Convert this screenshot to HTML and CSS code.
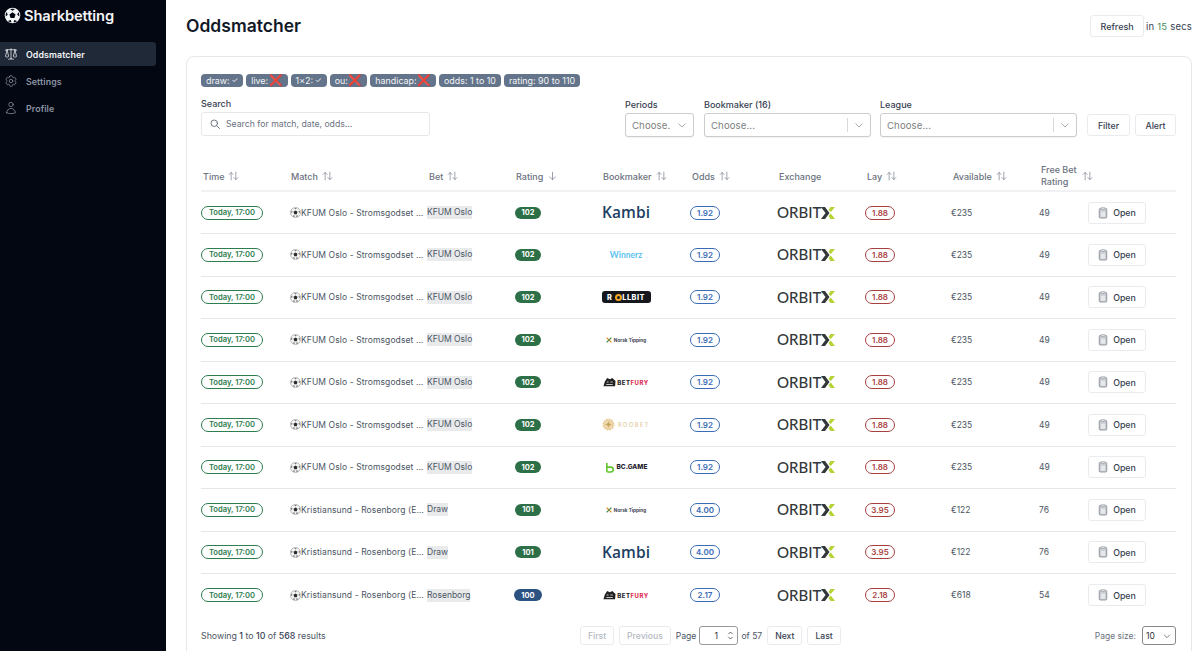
FILE: index.html
```html
<!DOCTYPE html>
<html lang="en">
<head>
<meta charset="utf-8">
<title>Sharkbetting - Oddsmatcher</title>
<link rel="stylesheet" href="styles.css">
</head>
<body>
<svg class="defs" aria-hidden="true">
  <symbol id="ball" viewBox="0 0 24 24">
    <circle cx="12" cy="12" r="11" fill="#f4f4f5" stroke="#9a9a9a" stroke-width="1.400"/>
    <path d="M12 7.500l4.300 3.100-1.600 5H9.300l-1.600-5z" fill="#2b2b2b"/>
    <path d="M9 3.200q3-1 6 0L12 5zM20 7.500q1.700 2.500 1.500 5.500l-2.800-2zM4 7.500Q2.300 10 2.500 13l2.800-2zM6 19.500q2 1.700 4.500 2l-1-3.300zM18 19.500q-2 1.700-4.500 2l1-3.300z" fill="#4a4a4a"/>
  </symbol>
  <symbol id="sort" viewBox="0 0 14 12">
    <path d="M4 11V1.500M1.500 4L4 1.500 6.500 4M10 1v9.500M7.500 8l2.500 2.500L12.500 8" fill="none" stroke="currentColor" stroke-width="1" stroke-linecap="round" stroke-linejoin="round"/>
  </symbol>
  <symbol id="down" viewBox="0 0 12 12">
    <path d="M6 1.500V10.500M2.500 7L6 10.500 9.500 7" fill="none" stroke="currentColor" stroke-width="1" stroke-linecap="round" stroke-linejoin="round"/>
  </symbol>
  <symbol id="chev" viewBox="0 0 12 12">
    <path d="M2.500 4.500L6 8l3.500-3.500" fill="none" stroke="currentColor" stroke-width="1"/>
  </symbol>
  <symbol id="doc" viewBox="0 0 12 14">
    <rect x="1.500" y="1.500" width="9" height="11.500" rx="1.300" fill="#c9cdd3" stroke="#858a92" stroke-width="1"/>
    <rect x="3.500" y=".7" width="5" height="2" rx=".6" fill="#eef0f2" stroke="#858a92" stroke-width=".7"/>
    <path d="M3.500 5.500h5v6h-5z" fill="#e6e8ea"/>
  </symbol>
  <symbol id="orbitx" viewBox="0 0 14 12">
    <path d="M0 0h4L8.500 6 4 12H0l4.500-6z" fill="#33383a"/>
    <path d="M9.500 0H14L9.800 5 7.500 3zM7.500 9l2.300-2.500L14 12H9.500z" fill="#b5d334"/>
  </symbol>
  <symbol id="norskx" viewBox="0 0 10 10">
    <path d="M1 1l8 8" stroke="#e08a2a" stroke-width="2.200"/><path d="M9 1L1 9" stroke="#4a8f4a" stroke-width="2.200"/>
  </symbol>
  <symbol id="fury" viewBox="0 0 14 10">
    <path d="M.5 9.500L2 4.500 4.500.7 7.500 2 10 .7l3.500 3.300-.5 5.500z" fill="#222"/>
    <path d="M4 5h2M8 5h2.500M3.500 7.700h7" stroke="#fff" stroke-width=".8"/>
  </symbol>
</svg>

<div class="app">
  <aside class="sidebar">
    <div class="brand">
      <svg class="brand-ball" viewBox="0 0 24 24"><circle cx="12" cy="12" r="11" fill="#f3f4f6"/><path d="M12 7.500l4.300 3.100-1.600 5H9.300l-1.600-5z" fill="#030712"/><path d="M8.500 2.800q3.500-1 7 0L12 5.200zM20.300 7q1.800 3 1.400 6.300l-3-2.300zM3.700 7q-1.800 3-1.400 6.300l3-2.300zM5.500 19.700q2.300 1.900 5 2.300l-1-3.800zM18.500 19.700q-2.300 1.900-5 2.300l1-3.800z" fill="#030712"/></svg>
      <span>Sharkbetting</span>
    </div>
    <nav class="nav">
      <a class="nav-item active">
        <svg class="nav-icon" viewBox="0 0 24 24"><path d="M12 3v17.250m0 0c-1.472 0-2.882.265-4.185.75M12 20.250c1.472 0 2.882.265 4.185.75M18.750 4.970A48.416 48.416 0 0 0 12 4.500c-2.291 0-4.545.16-6.750.47m13.500 0c1.010.143 2.010.317 3 .52m-3-.52 2.620 10.726c.122.499-.106 1.028-.589 1.202a5.988 5.988 0 0 1-2.031.352 5.988 5.988 0 0 1-2.031-.352c-.483-.174-.711-.703-.59-1.202L18.750 4.971Zm-16.500.52c.99-.203 1.990-.377 3-.52m0 0 2.620 10.726c.122.499-.106 1.028-.589 1.202a5.989 5.989 0 0 1-2.031.352 5.989 5.989 0 0 1-2.031-.352c-.483-.174-.711-.703-.59-1.202L5.250 4.971Z"/></svg>
        Oddsmatcher
      </a>
      <a class="nav-item">
        <svg class="nav-icon" viewBox="0 0 24 24"><path d="M9.594 3.940c.09-.542.56-.94 1.110-.94h2.593c.55 0 1.020.398 1.110.94l.213 1.281c.063.374.313.686.645.870.074.04.147.083.22.127.325.196.72.257 1.075.124l1.217-.456a1.125 1.125 0 0 1 1.370.49l1.296 2.247a1.125 1.125 0 0 1-.26 1.431l-1.003.827c-.293.241-.438.613-.43.992a7.723 7.723 0 0 1 0 .255c-.008.378.137.75.43.991l1.004.827c.424.35.534.955.26 1.430l-1.298 2.247a1.125 1.125 0 0 1-1.369.491l-1.217-.456c-.355-.133-.75-.072-1.076.124a6.470 6.470 0 0 1-.22.128c-.331.183-.581.495-.644.869l-.213 1.281c-.09.543-.56.94-1.110.94h-2.594c-.55 0-1.019-.398-1.110-.94l-.213-1.281c-.062-.374-.312-.686-.644-.870a6.520 6.520 0 0 1-.22-.127c-.325-.196-.72-.257-1.076-.124l-1.217.456a1.125 1.125 0 0 1-1.369-.49l-1.297-2.247a1.125 1.125 0 0 1 .26-1.431l1.004-.827c.292-.24.437-.613.43-.991a6.932 6.932 0 0 1 0-.255c.007-.38-.138-.751-.43-.992l-1.004-.827a1.125 1.125 0 0 1-.26-1.430l1.297-2.247a1.125 1.125 0 0 1 1.370-.491l1.216.456c.356.133.751.072 1.076-.124.072-.044.146-.086.22-.128.332-.183.582-.495.644-.869l.214-1.280Z"/><path d="M15 12a3 3 0 1 1-6 0 3 3 0 0 1 6 0Z"/></svg>
        Settings
      </a>
      <a class="nav-item">
        <svg class="nav-icon" viewBox="0 0 24 24"><path d="M15.750 6a3.750 3.750 0 1 1-7.500 0 3.750 3.750 0 0 1 7.500 0ZM4.501 20.118a7.500 7.500 0 0 1 14.998 0A17.933 17.933 0 0 1 12 21.750c-2.676 0-5.216-.584-7.499-1.632Z"/></svg>
        Profile
      </a>
    </nav>
  </aside>

  <main class="main">
    <header class="topbar">
      <h1 class="title">Oddsmatcher</h1>
      <div class="refresh">
        <button class="btn btn-refresh">Refresh</button>
        <span>in <b class="secs">15</b> secs</span>
      </div>
    </header>

    <section class="card">
      <div class="chips">
        <span class="chip">draw: <span class="ok">✓</span></span>
        <span class="chip">live: <span class="x">❌</span></span>
        <span class="chip">1x2: <span class="ok">✓</span></span>
        <span class="chip">ou: <span class="x">❌</span></span>
        <span class="chip">handicap: <span class="x">❌</span></span>
        <span class="chip">odds: 1 to 10</span>
        <span class="chip">rating: 90 to 110</span>
      </div>

      <div class="filters">
        <div class="field search-field">
          <label class="label">Search</label>
          <div class="search">
            <svg class="search-icon" viewBox="0 0 24 24"><path d="m21 21-5.200-5.200M17 10.500a6.500 6.500 0 1 1-13 0 6.500 6.500 0 0 1 13 0Z"/></svg>
            <span>Search for match, date, odds...</span>
          </div>
        </div>
        <div class="filter-group">
          <div class="field f-periods">
            <label class="label">Periods</label>
            <div class="select"><span class="select-value">Choose...</span><svg class="chev"><use href="#chev"/></svg></div>
          </div>
          <div class="field f-book">
            <label class="label">Bookmaker (16)</label>
            <div class="select"><span class="select-value">Choose...</span><i class="sep"></i><svg class="chev"><use href="#chev"/></svg></div>
          </div>
          <div class="field f-league">
            <label class="label">League</label>
            <div class="select"><span class="select-value">Choose...</span><i class="sep"></i><svg class="chev"><use href="#chev"/></svg></div>
          </div>
          <button class="btn btn-filter">Filter</button>
          <button class="btn btn-alert">Alert</button>
        </div>
      </div>

      <table class="grid">
        <colgroup>
          <col class="c-time"><col class="c-match"><col class="c-bet"><col class="c-rating"><col class="c-book"><col class="c-odds"><col class="c-ex"><col class="c-lay"><col class="c-av"><col class="c-free"><col class="c-open">
        </colgroup>
        <thead>
          <tr>
            <th><span class="th">Time <svg class="sort"><use href="#sort"/></svg></span></th>
            <th><span class="th">Match <svg class="sort"><use href="#sort"/></svg></span></th>
            <th><span class="th">Bet <svg class="sort"><use href="#sort"/></svg></span></th>
            <th><span class="th">Rating <svg class="sort"><use href="#down"/></svg></span></th>
            <th><span class="th">Bookmaker <svg class="sort"><use href="#sort"/></svg></span></th>
            <th><span class="th">Odds <svg class="sort"><use href="#sort"/></svg></span></th>
            <th><span class="th">Exchange</span></th>
            <th><span class="th">Lay <svg class="sort"><use href="#sort"/></svg></span></th>
            <th><span class="th">Available <svg class="sort"><use href="#sort"/></svg></span></th>
            <th><span class="th"><span class="th-wrap">Free Bet Rating</span> <svg class="sort"><use href="#sort"/></svg></span></th>
            <th></th>
          </tr>
        </thead>
        <tbody>
          <tr>
            <td><span class="pill time">Today, 17:00</span></td>
            <td><div class="match"><svg class="ball"><use href="#ball"/></svg><span class="match-name">KFUM Oslo - Stromsgodset (Eliteserien)</span></div></td>
            <td><span class="bet">KFUM Oslo</span></td>
            <td><span class="rate green">102</span></td>
            <td><div class="logo"><span class="kambi">Kambi</span></div></td>
            <td><span class="pill odds">1.92</span></td>
            <td><span class="orbit">ORBIT<svg class="orbit-x"><use href="#orbitx"/></svg></span></td>
            <td><span class="pill lay">1.88</span></td>
            <td class="num">€235</td>
            <td class="num">49</td>
            <td><button class="btn btn-open"><svg class="doc"><use href="#doc"/></svg>Open</button></td>
          </tr>
          <tr>
            <td><span class="pill time">Today, 17:00</span></td>
            <td><div class="match"><svg class="ball"><use href="#ball"/></svg><span class="match-name">KFUM Oslo - Stromsgodset (Eliteserien)</span></div></td>
            <td><span class="bet">KFUM Oslo</span></td>
            <td><span class="rate green">102</span></td>
            <td><div class="logo"><span class="winnerz">Winnerz</span></div></td>
            <td><span class="pill odds">1.92</span></td>
            <td><span class="orbit">ORBIT<svg class="orbit-x"><use href="#orbitx"/></svg></span></td>
            <td><span class="pill lay">1.88</span></td>
            <td class="num">€235</td>
            <td class="num">49</td>
            <td><button class="btn btn-open"><svg class="doc"><use href="#doc"/></svg>Open</button></td>
          </tr>
          <tr>
            <td><span class="pill time">Today, 17:00</span></td>
            <td><div class="match"><svg class="ball"><use href="#ball"/></svg><span class="match-name">KFUM Oslo - Stromsgodset (Eliteserien)</span></div></td>
            <td><span class="bet">KFUM Oslo</span></td>
            <td><span class="rate green">102</span></td>
            <td><div class="logo"><span class="rollbit">R<i class="rollbit-o"></i>LLBIT</span></div></td>
            <td><span class="pill odds">1.92</span></td>
            <td><span class="orbit">ORBIT<svg class="orbit-x"><use href="#orbitx"/></svg></span></td>
            <td><span class="pill lay">1.88</span></td>
            <td class="num">€235</td>
            <td class="num">49</td>
            <td><button class="btn btn-open"><svg class="doc"><use href="#doc"/></svg>Open</button></td>
          </tr>
          <tr>
            <td><span class="pill time">Today, 17:00</span></td>
            <td><div class="match"><svg class="ball"><use href="#ball"/></svg><span class="match-name">KFUM Oslo - Stromsgodset (Eliteserien)</span></div></td>
            <td><span class="bet">KFUM Oslo</span></td>
            <td><span class="rate green">102</span></td>
            <td><div class="logo"><span class="norsk"><svg class="norsk-x"><use href="#norskx"/></svg>Norsk Tipping</span></div></td>
            <td><span class="pill odds">1.92</span></td>
            <td><span class="orbit">ORBIT<svg class="orbit-x"><use href="#orbitx"/></svg></span></td>
            <td><span class="pill lay">1.88</span></td>
            <td class="num">€235</td>
            <td class="num">49</td>
            <td><button class="btn btn-open"><svg class="doc"><use href="#doc"/></svg>Open</button></td>
          </tr>
          <tr>
            <td><span class="pill time">Today, 17:00</span></td>
            <td><div class="match"><svg class="ball"><use href="#ball"/></svg><span class="match-name">KFUM Oslo - Stromsgodset (Eliteserien)</span></div></td>
            <td><span class="bet">KFUM Oslo</span></td>
            <td><span class="rate green">102</span></td>
            <td><div class="logo"><span class="betfury"><svg class="fury-icon"><use href="#fury"/></svg>BET<em>FURY</em></span></div></td>
            <td><span class="pill odds">1.92</span></td>
            <td><span class="orbit">ORBIT<svg class="orbit-x"><use href="#orbitx"/></svg></span></td>
            <td><span class="pill lay">1.88</span></td>
            <td class="num">€235</td>
            <td class="num">49</td>
            <td><button class="btn btn-open"><svg class="doc"><use href="#doc"/></svg>Open</button></td>
          </tr>
          <tr>
            <td><span class="pill time">Today, 17:00</span></td>
            <td><div class="match"><svg class="ball"><use href="#ball"/></svg><span class="match-name">KFUM Oslo - Stromsgodset (Eliteserien)</span></div></td>
            <td><span class="bet">KFUM Oslo</span></td>
            <td><span class="rate green">102</span></td>
            <td><div class="logo"><span class="roobet"><svg class="roo-icon" viewBox="0 0 12 12"><circle cx="6" cy="6" r="4.500" fill="#efd9b0" stroke="#e6c88e" stroke-width="2" stroke-dasharray="1.500 .8"/><path d="M6 3l.9 2.100L9 6l-2.100.9L6 9l-.9-2.100L3 6l2.100-.9z" fill="#c9a15f"/></svg>ROOBET</span></div></td>
            <td><span class="pill odds">1.92</span></td>
            <td><span class="orbit">ORBIT<svg class="orbit-x"><use href="#orbitx"/></svg></span></td>
            <td><span class="pill lay">1.88</span></td>
            <td class="num">€235</td>
            <td class="num">49</td>
            <td><button class="btn btn-open"><svg class="doc"><use href="#doc"/></svg>Open</button></td>
          </tr>
          <tr>
            <td><span class="pill time">Today, 17:00</span></td>
            <td><div class="match"><svg class="ball"><use href="#ball"/></svg><span class="match-name">KFUM Oslo - Stromsgodset (Eliteserien)</span></div></td>
            <td><span class="bet">KFUM Oslo</span></td>
            <td><span class="rate green">102</span></td>
            <td><div class="logo"><span class="bcgame"><svg class="bc-icon" viewBox="0 0 10 12"><path d="M2 1v8.500a1.500 1.500 0 0 0 1.500 1.500h3a2.700 2.700 0 0 0 0-5.400H2" fill="none" stroke="#5fc42d" stroke-width="1.800"/></svg>BC.GAME</span></div></td>
            <td><span class="pill odds">1.92</span></td>
            <td><span class="orbit">ORBIT<svg class="orbit-x"><use href="#orbitx"/></svg></span></td>
            <td><span class="pill lay">1.88</span></td>
            <td class="num">€235</td>
            <td class="num">49</td>
            <td><button class="btn btn-open"><svg class="doc"><use href="#doc"/></svg>Open</button></td>
          </tr>
          <tr>
            <td><span class="pill time">Today, 17:00</span></td>
            <td><div class="match"><svg class="ball"><use href="#ball"/></svg><span class="match-name">Kristiansund - Rosenborg (Eliteserien)</span></div></td>
            <td><span class="bet">Draw</span></td>
            <td><span class="rate green">101</span></td>
            <td><div class="logo"><span class="norsk"><svg class="norsk-x"><use href="#norskx"/></svg>Norsk Tipping</span></div></td>
            <td><span class="pill odds">4.00</span></td>
            <td><span class="orbit">ORBIT<svg class="orbit-x"><use href="#orbitx"/></svg></span></td>
            <td><span class="pill lay">3.95</span></td>
            <td class="num">€122</td>
            <td class="num">76</td>
            <td><button class="btn btn-open"><svg class="doc"><use href="#doc"/></svg>Open</button></td>
          </tr>
          <tr>
            <td><span class="pill time">Today, 17:00</span></td>
            <td><div class="match"><svg class="ball"><use href="#ball"/></svg><span class="match-name">Kristiansund - Rosenborg (Eliteserien)</span></div></td>
            <td><span class="bet">Draw</span></td>
            <td><span class="rate green">101</span></td>
            <td><div class="logo"><span class="kambi">Kambi</span></div></td>
            <td><span class="pill odds">4.00</span></td>
            <td><span class="orbit">ORBIT<svg class="orbit-x"><use href="#orbitx"/></svg></span></td>
            <td><span class="pill lay">3.95</span></td>
            <td class="num">€122</td>
            <td class="num">76</td>
            <td><button class="btn btn-open"><svg class="doc"><use href="#doc"/></svg>Open</button></td>
          </tr>
          <tr>
            <td><span class="pill time">Today, 17:00</span></td>
            <td><div class="match"><svg class="ball"><use href="#ball"/></svg><span class="match-name">Kristiansund - Rosenborg (Eliteserien)</span></div></td>
            <td><span class="bet">Rosenborg</span></td>
            <td><span class="rate blue">100</span></td>
            <td><div class="logo"><span class="betfury"><svg class="fury-icon"><use href="#fury"/></svg>BET<em>FURY</em></span></div></td>
            <td><span class="pill odds">2.17</span></td>
            <td><span class="orbit">ORBIT<svg class="orbit-x"><use href="#orbitx"/></svg></span></td>
            <td><span class="pill lay">2.18</span></td>
            <td class="num">€618</td>
            <td class="num">54</td>
            <td><button class="btn btn-open"><svg class="doc"><use href="#doc"/></svg>Open</button></td>
          </tr>
        </tbody>
      </table>

      <div class="pager">
        <div class="results">Showing <b>1</b> to <b>10</b> of <b>568</b> results</div>
        <div class="pages">
          <button class="btn btn-page disabled">First</button>
          <button class="btn btn-page disabled">Previous</button>
          <span class="page-label">Page</span>
          <div class="page-input"><span>1</span><svg class="spin" viewBox="0 0 8 12"><path d="M1.500 4.500L4 2l2.500 2.500M1.500 7.500L4 10l2.500-2.500" fill="none" stroke="#555" stroke-width="1"/></svg></div>
          <span class="page-label">of 57</span>
          <button class="btn btn-page">Next</button>
          <button class="btn btn-page">Last</button>
        </div>
        <div class="size">
          <span>Page size:</span>
          <div class="size-select"><span>10</span><svg class="chev"><use href="#chev"/></svg></div>
        </div>
      </div>
    </section>
  </main>
</div>
</body>
</html>
```

FILE: styles.css
```css
* { box-sizing: border-box; }
html, body { margin: 0; height: 100%; overflow: hidden; }
body { font-family: Inter, "Liberation Sans", sans-serif; font-size: 8.5px; color: #374151; background: #fff; }
.defs { display: none; }
.app { display: flex; height: 651px; overflow: hidden; }

.sidebar { width: 166px; flex: none; background: #030712; padding: 7px 0 0; color: #9ca3af; }
.brand { display: flex; align-items: center; gap: 3px; padding-left: 4px; height: 17px; color: #f3f4f6; font-size: 14.700px; font-weight: 600; letter-spacing: -.1px; }
.brand-ball { width: 17px; height: 17px; flex: none; }
.nav { margin-top: 18px; padding-right: 10px; display: flex; flex-direction: column; gap: 3px; }
.nav-item { display: flex; align-items: center; gap: 8px; height: 24px; padding-left: 4px; font-size: 8.800px; font-weight: 600; letter-spacing: .1px; border-radius: 0 3px 3px 0; color: #8b93a3; }
.nav-item.active { background: #1f2937; color: #f3f4f6; }
.nav-icon { width: 14px; height: 14px; flex: none; fill: none; stroke: currentColor; stroke-width: 1.300; stroke-linecap: round; stroke-linejoin: round; }

.main { flex: 1; min-width: 0; padding: 15px 8px 0 20px; }
.topbar { display: flex; justify-content: space-between; align-items: flex-start; height: 41px; }
.title { margin: 0; font-size: 17.500px; line-height: 22px; font-weight: 600; color: #111827; }
.refresh { display: flex; align-items: center; gap: 2px; font-size: 9.500px; letter-spacing: .2px; color: #374151; }
.secs { font-weight: 400; color: #3f8a5a; }

.btn { font: inherit; font-weight: 500; background: #fff; border: 1px solid #e9ebee; border-radius: 3px; color: #374151; padding: 0; cursor: pointer; }
.btn-refresh { width: 54px; height: 22px; font-size: 9px; letter-spacing: 0; }

.card { height: 640px; border: 1px solid #e5e7eb; border-radius: 8px; padding: 17px 15px 0 14px; }
.chips { display: flex; gap: 3px; height: 14px; }
.chip { display: inline-flex; align-items: center; padding: 0 5px; height: 13px; border-radius: 4px; background: #64748b; color: #f3f4f6; font-size: 8.900px; white-space: nowrap; }
.ok { font-size: 7.500px; margin-left: 2px; }
.x { color: #dc2626; font-size: 11px; line-height: 1; font-family: "DejaVu Sans", sans-serif; margin-left: .5px; }

.filters { display: flex; justify-content: space-between; margin-top: 10px; height: 46px; }
.field { display: flex; flex-direction: column; }
.label { font-size: 9px; line-height: 11px; font-weight: 500; color: #374151; margin-bottom: 3px; }
.search-field { width: 229px; }
.search { display: flex; align-items: center; gap: 5px; height: 24px; padding-left: 7px; border: 1px solid #e5e7eb; border-radius: 3px; color: #6b7280; font-size: 8.700px; }
.search-icon { width: 12px; height: 12px; fill: none; stroke: #4b5563; stroke-width: 1.600; stroke-linecap: round; }
.filter-group { display: flex; align-items: flex-start; padding-top: 1px; }
.select { display: flex; align-items: center; height: 24px; border: 1px solid #ccc; border-radius: 3px; padding-left: 6px; color: #808080; font-size: 9.600px; box-shadow: 0 1px 1px rgba(0,0,0,.05); background: #fff; }
.select-value { flex: 1; min-width: 0; overflow: hidden; white-space: nowrap; letter-spacing: .1px; }
.sep { width: 1px; height: 14px; background: #d9d9d9; }
.chev { width: 12px; height: 12px; flex: none; color: #aaa; margin: 0 5px 0 5px; }
.f-periods { width: 69px; margin-right: 10px; }
.f-book { width: 167px; margin-right: 9px; }
.f-league { width: 197px; margin-right: 10px; }
.btn-filter { width: 43px; height: 22px; margin-top: 15px; margin-right: 5px; font-size: 8.800px; }
.btn-alert { width: 41px; height: 22px; margin-top: 15px; font-size: 8.800px; }

.grid { table-layout: fixed; border-collapse: collapse; width: 975px; margin-top: 16px; }
.c-time { width: 88px; } .c-match { width: 138px; } .c-bet { width: 87px; } .c-rating { width: 87px; }
.c-book { width: 89px; } .c-odds { width: 87px; } .c-ex { width: 88px; } .c-lay { width: 86px; }
.c-av { width: 88px; } .c-free { width: 49px; } .c-open { width: 88px; }
.grid th { height: 31px; padding: 2px 0 0 2px; text-align: left; font-weight: 500; font-size: 9px; color: #6b7280; border-bottom: 2px solid #f0f1f3; white-space: nowrap; overflow: visible; }
.grid td { height: 42.500px; padding: 0; border-bottom: 1px solid #e5e7eb; white-space: nowrap; }
.grid tbody tr:last-child td { border-bottom: 0; }
.th { display: inline-flex; align-items: center; gap: 4px; }
.th-wrap { white-space: normal; width: 37px; line-height: 12px; }
.sort { width: 11px; height: 10px; color: #858c98; }

.pill { display: inline-flex; align-items: center; justify-content: center; height: 14px; border-radius: 7px; border: 1px solid; font-size: 8px; font-weight: 600; background: #fff; vertical-align: middle; }
.time { width: 62px; font-size: 7.600px; color: #2e7d4f; border-color: #2e7d4f; }
.odds { width: 30px; color: #3b6bb5; border-color: #3b6bb5; }
.lay { width: 30px; color: #a83f3f; border-color: #a83f3f; }
.match { display: flex; align-items: center; margin-left: 1px; padding-right: 1.500px; }
.ball { width: 11px; height: 11px; flex: none; }
.match-name { flex: 1; min-width: 0; overflow: hidden; text-overflow: ellipsis; color: #4b5563; letter-spacing: .1px; }
.bet { display: inline-block; background: #e9eaec; line-height: 13px; color: #4b5563; vertical-align: middle; }
.rate { display: inline-flex; align-items: center; justify-content: center; height: 12px; width: 26px; margin-left: 1px; border-radius: 6px; color: #fff; font-size: 7.500px; font-weight: 700; vertical-align: middle; }
.green { background: #2d7048; }
.blue { background: #2c5282; width: 28px; margin-left: 0; }
.num { color: #4b5563; }
.btn-open { display: inline-flex; align-items: center; justify-content: center; gap: 5px; width: 58px; height: 22px; font-size: 8.800px; vertical-align: middle; }
.doc { width: 10px; height: 12px; }

.logo { width: 50px; display: flex; justify-content: center; align-items: center; }
.kambi { font-family: "Open Sans", sans-serif; font-size: 15.500px; font-weight: 600; color: #1d3f63; line-height: 1; letter-spacing: .1px; }
.winnerz { font-family: "Lato", sans-serif; font-size: 8.500px; font-weight: 700; color: #5cc3ef; }
.rollbit { display: inline-flex; align-items: center; justify-content: center; width: 49px; height: 12px; border-radius: 3px; background: #15171c; color: #fff; font-size: 7.300px; font-weight: 800; letter-spacing: .5px; }
.rollbit-o { width: 7px; height: 7px; border-radius: 50%; border: 2px solid #f5a623; margin: 0 0 0 3px; }
.norsk { display: inline-flex; align-items: center; gap: 2px; font-size: 4.700px; font-weight: 700; color: #3a3f52; }
.norsk-x { width: 6px; height: 6px; }
.betfury { display: inline-flex; align-items: center; gap: 1px; font-size: 6px; font-weight: 800; color: #2a2a2a; letter-spacing: .5px; }
.betfury em { color: #e0325a; font-style: normal; margin-left: -1px; }
.fury-icon { width: 13px; height: 10px; }
.roobet { display: inline-flex; align-items: center; gap: 3px; font-size: 5.500px; letter-spacing: 1.600px; font-weight: 600; color: #e3cfa6; }
.roo-icon { width: 13px; height: 13px; }
.bcgame { display: inline-flex; align-items: center; gap: 3px; font-size: 6.500px; font-weight: 800; color: #1f2430; }
.bc-icon { width: 9px; height: 11px; }
.orbit { display: inline-flex; align-items: center; font-family: "Lato", sans-serif; font-size: 15px; font-weight: 500; color: #33383a; line-height: 1; }
.orbit-x { width: 14px; height: 12px; }

.pager { display: flex; align-items: center; height: 19px; margin-top: 10px; }
.results { width: 379px; flex: none; color: #4b5563; font-size: 8.800px; }
.results b { font-weight: 500; color: #374151; }
.pages { display: flex; align-items: center; gap: 5px; font-size: 8.600px; }
.btn-page { height: 19px; padding: 0 7px; font-size: 8.600px; }
.btn-page.disabled { color: #b3b8c0; }
.page-label { color: #4b5563; }
.page-input { display: flex; align-items: center; justify-content: space-between; width: 39px; height: 19px; border: 1px solid #999; border-radius: 3px; margin: 0 -2px; padding: 0 3px 0 14px; color: #333; }
.spin { width: 7px; height: 11px; }
.size { display: flex; align-items: center; gap: 6px; margin-left: auto; color: #6b7280; font-size: 8.500px; }
.size-select { display: flex; align-items: center; justify-content: space-between; width: 34px; height: 19px; border: 1px solid #888; border-radius: 3px; padding-left: 3px; color: #333; }
.size-select .chev { margin: 0 3px 0 0; color: #666; width: 10px; height: 10px; }
```
